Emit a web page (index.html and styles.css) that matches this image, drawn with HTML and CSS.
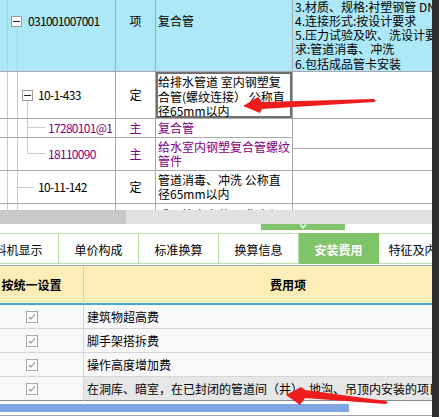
FILE: index.html
```html
<!DOCTYPE html>
<html lang="zh">
<head>
<meta charset="utf-8">
<title>安装费用</title>
<link rel="stylesheet" href="styles.css">
</head>
<body>
<div class="screen">
  <div class="main">
    <div class="grid-view">
      <div class="grid">
        <!-- row 1 -->
        <div class="cell tree t1"><span class="exp"></span><span class="code">031001007001</span></div>
        <div class="cell mid hl">项</div>
        <div class="cell name hl">复合管</div>
        <div class="cell desc hl">
          <div>3.材质、规格:衬塑钢管 DN65</div>
          <div>4.连接形式:按设计要求</div>
          <div>5.压力试验及吹、洗设计要</div>
          <div>求:管道消毒、冲洗</div>
          <div>6.包括成品管卡安装</div>
        </div>
        <!-- row 2 -->
        <div class="cell tree t2"><span class="exp exp2"></span><span class="code">10-1-433</span></div>
        <div class="cell mid">定</div>
        <div class="cell name selected"><div>给排水管道 室内钢塑复<br>合管(螺纹连接） 公称直<br>径65mm以内</div></div>
        <div class="cell desc"></div>
        <!-- row 3 -->
        <div class="cell tree t3 pur"><span class="code">17280101@1</span></div>
        <div class="cell mid pur">主</div>
        <div class="cell name pur">复合管</div>
        <div class="cell desc"></div>
        <!-- row 4 -->
        <div class="cell tree t4 pur"><span class="code">18110090</span></div>
        <div class="cell mid pur">主</div>
        <div class="cell name pur"><div>给水室内钢塑复合管螺纹<br>管件</div></div>
        <div class="cell desc"></div>
        <!-- row 5 -->
        <div class="cell tree t5"><span class="code">10-11-142</span></div>
        <div class="cell mid">定</div>
        <div class="cell name"><div>管道消毒、冲洗 公称直<br>径65mm以内</div></div>
        <div class="cell desc"></div>
        <!-- row 6 -->
        <div class="cell tree t6"></div>
        <div class="cell mid"></div>
        <div class="cell name top"><div>成品管卡安装 公称直径</div></div>
        <div class="cell desc"></div>
      </div>
    </div>
    <div class="hscroll"><div class="thumb"></div></div>
    <div class="splitter">
      <div class="handle">
        <svg width="10" height="6" viewBox="0 0 10 6"><polyline points="2,0.5 5,3.5 8,0.5" fill="none" stroke="#fff" stroke-width="1.2"/><polyline points="3.5,3 5,4.5 6.5,3" fill="none" stroke="#fff" stroke-width="1"/></svg>
      </div>
    </div>
    <div class="tabs">
      <div class="tab first">工料机显示</div>
      <div class="tab">单价构成</div>
      <div class="tab">标准换算</div>
      <div class="tab">换算信息</div>
      <div class="tab on">安装费用</div>
      <div class="tab">特征及内容</div>
    </div>
    <div class="tab-gap"></div>
    <div class="tab-rule"></div>
    <div class="fee-view">
      <div class="fee">
        <div class="fh c1">按统一设置</div>
        <div class="fh">费用项</div>

        <div class="fc c1"><svg class="chk" width="12" height="12" viewBox="0 0 12 12"><rect x="0.5" y="0.5" width="11" height="11" fill="#fff" stroke="#a6a6a6"/><polyline points="3,6 5,8 9,3.5" fill="none" stroke="#7c8896" stroke-width="1.1"/></svg></div>
        <div class="fc c2">建筑物超高费</div>

        <div class="fc c1"><svg class="chk" width="12" height="12" viewBox="0 0 12 12"><rect x="0.5" y="0.5" width="11" height="11" fill="#fff" stroke="#a6a6a6"/><polyline points="3,6 5,8 9,3.5" fill="none" stroke="#7c8896" stroke-width="1.1"/></svg></div>
        <div class="fc c2">脚手架搭拆费</div>

        <div class="fc c1"><svg class="chk" width="12" height="12" viewBox="0 0 12 12"><rect x="0.5" y="0.5" width="11" height="11" fill="#fff" stroke="#a6a6a6"/><polyline points="3,6 5,8 9,3.5" fill="none" stroke="#7c8896" stroke-width="1.1"/></svg></div>
        <div class="fc c2">操作高度增加费</div>

        <div class="fc c1 last"><svg class="chk" width="12" height="12" viewBox="0 0 12 12"><rect x="0.5" y="0.5" width="11" height="11" fill="#fff" stroke="#a6a6a6"/><polyline points="3,6 5,8 9,3.5" fill="none" stroke="#7c8896" stroke-width="1.1"/></svg></div>
        <div class="fc c2 last sel">在洞库、暗室，在已封闭的管道间（井）、地沟、吊顶内安装的项目</div>
      </div>
    </div>
    <div class="footer">
      <div class="progress"></div>
      <div class="footer-rule"></div>
    </div>
  </div>
  <div class="edge"></div>
  <svg class="arrows" width="439" height="417" viewBox="0 0 439 417">
    <polygon points="243,106 258,97 262,102 374,99 376,101 374,102 262,109 260,113" fill="#ee1c1c"/>
    <polygon points="286,395 301,387 305,390 386,401 388,403 385,404 305,398 300,405" fill="#ee1c1c"/>
  </svg>
</div>
</body>
</html>
```
FILE: styles.css
```css
* { box-sizing: border-box; }
html, body { margin: 0; padding: 0; }
body {
  width: 439px;
  height: 417px;
  overflow: hidden;
  background: #fff;
  font-family: "Noto Sans CJK SC", "Noto Sans", sans-serif;
  font-size: 12px;
  color: #000;
}
.screen {
  position: relative;
  display: flex;
  width: 439px;
  height: 417px;
  overflow: hidden;
}
.main {
  width: 432px;
  flex: none;
  display: flex;
  flex-direction: column;
  overflow: hidden;
  background: #fff;
}
.edge { flex: 1; background: #2f2f2f; }

/* upper grid */
.grid-view { height: 210px; overflow: hidden; flex: none; }
.grid {
  --tl: #cacaca;
  display: grid;
  grid-template-columns: 116px 40px 137px 160px;
  grid-template-rows: 101px 47px 19px 33px 33px 40px;
  margin-top: -29px;
  width: 453px;
}
.cell {
  border-right: 1px solid #a9a9a9;
  border-bottom: 1px solid #a9a9a9;
  display: flex;
  align-items: center;
  white-space: nowrap;
  overflow: hidden;
  line-height: 14px;
}
.code { letter-spacing: -0.7px; }
.cell.mid { justify-content: center; }
.cell.name { padding-left: 2px; }
.cell.top { align-items: flex-start; padding-top: 4px; }
.cell.desc {
  padding-left: 2px;
  padding-top: 28.6px;
  border-right: none;
  flex-direction: column;
  align-items: flex-start;
  justify-content: flex-start;
  line-height: 14.3px;
}
.hl { background: #ade8f8; }
.pur { color: #800080; }
.cell.selected {
  align-items: flex-start;
  padding-top: 3px;
  line-height: 14.5px;
  box-shadow: inset 0 0 0 2px #707070;
}

.exp {
  flex: none;
  width: 11px;
  height: 11px;
  border: 1px solid #9b9b9b;
  background: linear-gradient(#222, #222) center / 7px 1px no-repeat, #fff;
  margin-right: 6px;
}
.exp2 { margin-right: 5px; }

.t1 {
  padding-left: 11px;
  background:
    linear-gradient(var(--tl), var(--tl)) 7px 0 / 1px 100% no-repeat,
    linear-gradient(var(--tl), var(--tl)) 17px 55px / 1px 100% no-repeat,
    #ade8f8;
}
.t2 {
  padding-left: 22px;
  background:
    linear-gradient(var(--tl), var(--tl)) 7px 0 / 1px 100% no-repeat,
    linear-gradient(var(--tl), var(--tl)) 17px 0 / 1px 100% no-repeat,
    linear-gradient(var(--tl), var(--tl)) 27px 28px / 1px 100% no-repeat;
}
.t3 {
  padding-left: 48px;
  background:
    linear-gradient(var(--tl), var(--tl)) 7px 0 / 1px 100% no-repeat,
    linear-gradient(var(--tl), var(--tl)) 17px 0 / 1px 100% no-repeat,
    linear-gradient(var(--tl), var(--tl)) 27px 0 / 1px 100% no-repeat,
    linear-gradient(var(--tl), var(--tl)) 27px 8px / 18px 1px no-repeat;
}
.t4 {
  padding-left: 48px;
  background:
    linear-gradient(var(--tl), var(--tl)) 7px 0 / 1px 100% no-repeat,
    linear-gradient(var(--tl), var(--tl)) 17px 0 / 1px 100% no-repeat,
    linear-gradient(var(--tl), var(--tl)) 27px 0 / 1px 16px no-repeat,
    linear-gradient(var(--tl), var(--tl)) 27px 15px / 18px 1px no-repeat;
}
.t5 {
  padding-left: 38px;
  background:
    linear-gradient(var(--tl), var(--tl)) 7px 0 / 1px 100% no-repeat,
    linear-gradient(var(--tl), var(--tl)) 17px 0 / 1px 100% no-repeat,
    linear-gradient(var(--tl), var(--tl)) 17px 16px / 17px 1px no-repeat;
}
.t6 {
  background:
    linear-gradient(var(--tl), var(--tl)) 7px 0 / 1px 100% no-repeat,
    linear-gradient(var(--tl), var(--tl)) 17px 0 / 1px 100% no-repeat;
}

/* scrollbar + splitter */
.hscroll { height: 14px; flex: none; background: #e1e1e1; }
.thumb { width: 126px; height: 14px; background: #c9c9c9; }
.splitter { height: 9px; flex: none; padding-left: 261px; }
.handle {
  width: 84px;
  height: 6px;
  background: #82c46c;
  display: flex;
  justify-content: center;
}
.handle svg { display: block; }

/* tabs */
.tabs { display: flex; height: 31px; margin-left: -33px; flex: none; }
.tab {
  flex: none;
  width: 80px;
  height: 31px;
  border-top: 1px solid #b6e1a4;
  border-bottom: 1px solid #b6e1a4;
  border-right: 1px solid #b6e1a4;
  display: flex;
  align-items: center;
  justify-content: center;
  padding-top: 1px;
}
.tab.first { width: 92px; }
.tab.on {
  background: #80c46a;
  border-color: #80c46a;
  color: #fff;
  font-weight: bold;
}
.tab-gap { height: 1px; flex: none; }
.tab-rule { height: 1px; flex: none; background: #a3a8b1; }

/* fee table */
.fee-view { height: 135px; overflow: hidden; flex: none; }
.fee {
  display: grid;
  grid-template-columns: 104px 408px;
  grid-template-rows: 39px;
  grid-auto-rows: 24px;
  margin-left: -20px;
}
.fh {
  background: #fdedb6;
  border-bottom: 2px solid #43a6d6;
  display: flex;
  align-items: center;
  justify-content: center;
  font-weight: bold;
}
.fh.c1 { border-right: 1px solid #cfcfcf; }
.fc {
  background: #f8f8f8;
  border-bottom: 1px solid #d5d5d5;
  display: flex;
  align-items: center;
  white-space: nowrap;
  overflow: hidden;
}
.fc.c1 { justify-content: center; border-right: 1px solid #d5d5d5; }
.fc.c2 { padding-left: 3px; }
.fc.sel { background: #e7e7e7; }
.fc.last { border-bottom-color: #8a8a8a; }
.chk { display: block; }

/* footer */
.footer { flex: none; height: 16px; padding-top: 3px; }
.progress { width: 349px; height: 8px; background: #7fa6e0; }
.footer-rule { margin-top: 3px; height: 1px; background: #a2a2a2; }

/* annotation arrows */
.arrows { position: absolute; left: 0; top: 0; pointer-events: none; }
```
